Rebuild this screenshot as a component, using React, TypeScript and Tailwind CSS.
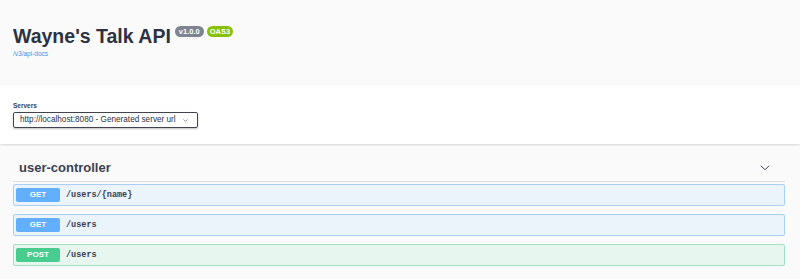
import { ChevronDown } from "lucide-react";

const ops = [
  { method: "GET", path: "/users/{name}" },
  { method: "GET", path: "/users" },
  { method: "POST", path: "/users" },
];

function OpRow({ method, path }: { method: string; path: string }) {
  const isGet = method === "GET";
  return (
    <div
      className={
        isGet
          ? "flex items-center h-[22px] px-[2px] border border-[#a9cff6] bg-[#ebf3fb] rounded-[2px]"
          : "flex items-center h-[22px] px-[2px] border border-[#a3dfc3] bg-[#e8f6f0] rounded-[2px]"
      }
    >
      <span
        className={
          isGet
            ? "w-[44px] h-[14px] flex items-center justify-center rounded-[2px] bg-[#61affe] text-white text-[8px] font-bold"
            : "w-[44px] h-[14px] flex items-center justify-center rounded-[2px] bg-[#49cc90] text-white text-[8px] font-bold"
        }
      >
        {method}
      </span>
      <span className="ml-[6px] text-[8.5px] font-bold text-[#3b4151] font-['Liberation_Mono',monospace]">
        {path}
      </span>
    </div>
  );
}

export default function App() {
  return (
    <div className="min-h-[279px] bg-[#fafafa] font-['Liberation_Sans',Arial,sans-serif] text-[#3b4151]">
      {/* Info header */}
      <div className="h-[85px] px-[13px] pt-[27px]">
        <div className="flex items-start">
          <h2 className="text-[19.5px] leading-[19px] font-bold text-[#2c3243]">Wayne's Talk API</h2>
          <span className="ml-[4px] -mt-[1px] h-[11px] px-[4px] flex items-center rounded-full bg-[#7d8492] text-white text-[7.5px] font-bold">
            v1.0.0
          </span>
          <span className="ml-[3px] -mt-[1px] h-[11px] px-[3px] flex items-center rounded-full bg-[#89bf04] text-white text-[7.5px] font-bold">
            OAS3
          </span>
        </div>
        <a className="block mt-[4px] text-[6.5px] leading-[8px] text-[#4990e2]">/v3/api-docs</a>
      </div>

      {/* Servers */}
      <div className="h-[59px] bg-white px-[13px] pt-[17px] shadow-[0_1px_2px_0_rgba(0,0,0,0.15)]">
        <div className="text-[6.5px] leading-[8px] font-bold">Servers</div>
        <div className="mt-[2px] w-[185px] h-[16px] flex items-center justify-between pl-[6px] pr-[8px] border border-[#41444e] rounded-[2px] shadow-[0_1px_2px_0_rgba(0,0,0,0.25)]">
          <span className="text-[8.2px] leading-[10px] text-[#2c3243]">http://localhost:8080 - Generated server url</span>
          <ChevronDown className="w-[7px] h-[7px]" strokeWidth={2} />
        </div>
      </div>

      {/* Tag section */}
      <div className="pl-[13px] pr-[15px] pt-[11px]">
        <div className="h-[27px] flex items-center justify-between pl-[6px] border-b border-[#dcdcdc]">
          <h3 className="text-[13px] font-bold">user-controller</h3>
          <svg className="mr-[15px] w-[10px] h-[6px]" viewBox="0 0 10 6" fill="none">
            <path d="M1 0.8L5 4.8L9 0.8" stroke="#3b4151" strokeWidth="1" />
          </svg>
        </div>
        <div className="mt-[2px] flex flex-col gap-[8px]">
          {ops.map((op, i) => (
            <OpRow key={i} method={op.method} path={op.path} />
          ))}
        </div>
      </div>
    </div>
  );
}
